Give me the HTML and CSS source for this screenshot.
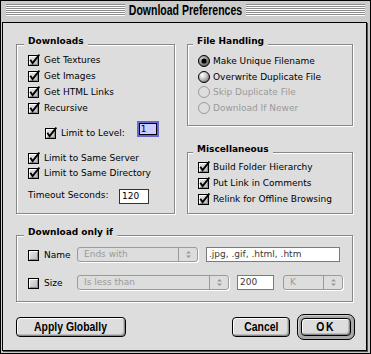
FILE: index.html
```html
<!DOCTYPE html>
<html>
<head>
<meta charset="utf-8">
<title>Download Preferences</title>
<link rel="stylesheet" href="styles.css">
</head>
<body>
<svg class="defs" width="0" height="0" aria-hidden="true">
  <defs>
    <linearGradient id="cbg" x1="0" y1="0" x2="1" y2="1">
      <stop offset="0" stop-color="#eeeeee"/>
      <stop offset="1" stop-color="#b4b4b4"/>
    </linearGradient>
    <radialGradient id="rdg" cx="0.35" cy="0.32" r="0.75">
      <stop offset="0" stop-color="#ffffff"/>
      <stop offset="0.5" stop-color="#c8c8c8"/>
      <stop offset="1" stop-color="#6e6e6e"/>
    </radialGradient>
    <radialGradient id="rdsel" cx="0.35" cy="0.32" r="0.75">
      <stop offset="0" stop-color="#d8d8d8"/>
      <stop offset="1" stop-color="#555555"/>
    </radialGradient>
    <symbol id="cb-off" viewBox="0 0 12 12">
      <rect x="0.5" y="1.5" width="10" height="10" fill="url(#cbg)" stroke="#000"/>
      <path d="M1.5 10V2.5H9.5" fill="none" stroke="#fff"/>
      <path d="M9.5 3V10.5H2" fill="none" stroke="#8a8a8a"/>
    </symbol>
    <symbol id="cb-on" viewBox="0 0 12 12">
      <rect x="0.5" y="1.5" width="10" height="10" fill="url(#cbg)" stroke="#000"/>
      <path d="M1.5 10V2.5H9.5" fill="none" stroke="#fff"/>
      <path d="M9.5 3V10.5H2" fill="none" stroke="#8a8a8a"/>
      <path d="M2.3 5.8L4.6 9.2L11.4 0.6" fill="none" stroke="#000" stroke-width="1.9"/>
    </symbol>
    <symbol id="rd-on" viewBox="0 0 12 12">
      <circle cx="6" cy="6" r="5.5" fill="url(#rdsel)" stroke="#000"/>
      <circle cx="6" cy="6" r="2.6" fill="#000"/>
    </symbol>
    <symbol id="rd-off" viewBox="0 0 12 12">
      <circle cx="6" cy="6" r="5.5" fill="url(#rdg)" stroke="#000"/>
    </symbol>
    <symbol id="rd-dis" viewBox="0 0 12 12">
      <circle cx="6" cy="6" r="5.5" fill="#dddddd" stroke="#9a9a9a"/>
    </symbol>
    <symbol id="arrows" viewBox="0 0 7 9">
      <path d="M1 3.5L3.5 1L6 3.5Z M1 5.5L3.5 8L6 5.5Z" fill="#999"/>
    </symbol>
  </defs>
</svg>

<div class="window">
  <div class="titlebar">
    <div class="stripes"></div>
    <div class="title"><span>Download Preferences</span></div>
    <div class="stripes"></div>
  </div>

  <div class="content">
    <div class="toprow">
      <div class="group downloads">
        <div class="glabel">Downloads</div>
        <div class="checks c1">
          <div class="row"><svg class="cb"><use href="#cb-on"/></svg><span>Get Textures</span></div>
          <div class="row"><svg class="cb"><use href="#cb-on"/></svg><span>Get Images</span></div>
          <div class="row"><svg class="cb"><use href="#cb-on"/></svg><span>Get HTML Links</span></div>
          <div class="row"><svg class="cb"><use href="#cb-on"/></svg><span>Recursive</span></div>
        </div>
        <div class="row level">
          <svg class="cb"><use href="#cb-on"/></svg><span>Limit to Level:</span>
          <div class="field focus">1</div>
        </div>
        <div class="checks c2">
          <div class="row"><svg class="cb"><use href="#cb-on"/></svg><span>Limit to Same Server</span></div>
          <div class="row"><svg class="cb"><use href="#cb-on"/></svg><span>Limit to Same Directory</span></div>
        </div>
        <div class="row timeout">
          <span class="tlabel">Timeout Seconds:</span>
          <div class="field tfield">120</div>
        </div>
      </div>

      <div class="rightcol">
        <div class="group filehandling">
          <div class="glabel small">File Handling</div>
          <div class="checks radios">
            <div class="row"><svg class="cb"><use href="#rd-on"/></svg><span>Make Unique Filename</span></div>
            <div class="row"><svg class="cb"><use href="#rd-off"/></svg><span>Overwrite Duplicate File</span></div>
            <div class="row dis"><svg class="cb"><use href="#rd-dis"/></svg><span>Skip Duplicate File</span></div>
            <div class="row dis"><svg class="cb"><use href="#rd-dis"/></svg><span>Download If Newer</span></div>
          </div>
        </div>
        <div class="group misc">
          <div class="glabel small">Miscellaneous</div>
          <div class="checks mchecks">
            <div class="row"><svg class="cb"><use href="#cb-on"/></svg><span>Build Folder Hierarchy</span></div>
            <div class="row"><svg class="cb"><use href="#cb-on"/></svg><span>Put Link in Comments</span></div>
            <div class="row"><svg class="cb"><use href="#cb-on"/></svg><span>Relink for Offline Browsing</span></div>
          </div>
        </div>
      </div>
    </div>

    <div class="group onlyif">
      <div class="glabel">Download only if</div>
      <div class="crit">
        <div class="row crow">
          <svg class="cb"><use href="#cb-off"/></svg><span class="clabel">Name</span>
          <div class="popup p-name"><span class="ptext">Ends with</span><span class="parrow"><svg class="arr"><use href="#arrows"/></svg></span></div>
          <div class="field dfield f-ext">.jpg, .gif, .html, .htm</div>
        </div>
        <div class="row crow">
          <svg class="cb"><use href="#cb-off"/></svg><span class="clabel">Size</span>
          <div class="popup p-size"><span class="ptext">Is less than</span><span class="parrow"><svg class="arr"><use href="#arrows"/></svg></span></div>
          <div class="field dfield f-size">200</div>
          <div class="popup p-unit"><span class="ptext">K</span><span class="parrow"><svg class="arr"><use href="#arrows"/></svg></span></div>
        </div>
      </div>
    </div>

    <div class="buttons">
      <div class="btn apply"><span>Apply Globally</span></div>
      <div class="btngroup">
        <div class="btn cancel"><span>Cancel</span></div>
        <div class="okring"><div class="btn ok"><span>OK</span></div></div>
      </div>
    </div>
  </div>
</div>
</body>
</html>
```

FILE: styles.css
```css
* { box-sizing: border-box; }

html, body {
  margin: 0;
  padding: 0;
}

body {
  width: 371px;
  height: 354px;
  overflow: hidden;
  background: #fff;
  font-family: "DejaVu Sans", Verdana, sans-serif;
  font-size: 9px;
  line-height: 12px;
  color: #000;
}

.defs {
  position: absolute;
  width: 0;
  height: 0;
  overflow: hidden;
}

.window {
  width: 371px;
  height: 354px;
  border: 1px solid #000;
  background: #cccccc;
  display: flex;
  flex-direction: column;
}

/* ---------- title bar ---------- */
.titlebar {
  flex: none;
  height: 21px;
  padding: 3px 5px 0;
  display: flex;
}

.stripes {
  flex: 1;
  height: 12px;
  background: repeating-linear-gradient(to bottom, #8c8c8c 0 1px, #ffffff 1px 2px);
}

.title {
  width: 121px;
  display: flex;
  justify-content: center;
  margin-top: -1px;
  font-family: "Liberation Sans", Arial, sans-serif;
  font-weight: bold;
  font-size: 14px;
  line-height: 14px;
}

.title span {
  white-space: nowrap;
  transform: scaleX(0.75);
}

/* ---------- content ---------- */
.content {
  flex: 1;
  margin: 0 3px 2px 1px;
  border: 1px solid #000;
  box-shadow: 1px 1px 0 #555;
  background: #dddddd;
  padding: 21px 0 0 13px;
}

.toprow {
  display: flex;
  gap: 12px;
  height: 170px;
}

.group {
  border: 1px solid #888;
  box-shadow: inset 1px 1px 0 #fff, 1px 1px 0 #fff;
}

.glabel {
  width: fit-content;
  margin: -10px 0 0 7px;
  padding: 0 4px;
  background: #dddddd;
  font-weight: bold;
  line-height: 12px;
  white-space: nowrap;
}

.glabel.small { margin-left: 5px; }

.downloads { width: 159px; }

.checks {
  display: flex;
  flex-direction: column;
  gap: 4px;
}

.row {
  display: flex;
  align-items: center;
  gap: 4px;
  white-space: nowrap;
}

.cb {
  flex: none;
  width: 12px;
  height: 12px;
}

.c1 { margin: 7px 0 0 11px; }

.level {
  margin: 9px 0 0 28px;
}

.field {
  flex: none;
  background: #fff;
  border: 1px solid #333;
  line-height: 12px;
  padding-left: 2px;
}

.field.focus {
  width: 18px;
  height: 12px;
  margin: 0 0 8px 10px;
  border: 1px solid #000;
  background: #ccccff;
  box-shadow: 0 0 0 2px #6767cf;
  line-height: 10px;
  padding-left: 1px;
}

.c2 {
  margin: 9px 0 0 11px;
  gap: 3px;
}

.timeout {
  margin: 10px 0 0 11px;
  align-items: flex-start;
  gap: 0;
}

.tlabel { width: 91px; }

.tfield {
  width: 30px;
  height: 15px;
  line-height: 13px;
}

/* right column */
.rightcol {
  width: 166px;
  display: flex;
  flex-direction: column;
  justify-content: space-between;
}

.filehandling { height: 82px; }
.misc { height: 62px; }

.radios {
  margin: 8px 0 0 10px;
  gap: 3.5px;
}

.radios .row,
.mchecks .row { gap: 3px; }

.dis { color: #9a9a9a; }

.mchecks {
  margin: 6px 0 0 10px;
}

/* ---------- download only if ---------- */
.onlyif {
  width: 337px;
  height: 67px;
  margin-top: 21px;
}

.crit {
  margin: 9px 0 0 11px;
  display: flex;
  flex-direction: column;
  gap: 13px;
}

.crow {
  height: 15px;
  gap: 0;
}

.crow .cb { margin-right: 4px; }

.clabel { width: 33px; }

.popup {
  flex: none;
  display: flex;
  height: 15px;
  border: 1px solid #9a9a9a;
  border-radius: 3px;
  color: #9a9a9a;
  background: #dddddd;
  box-shadow: 1px 1px 0 #fff;
}

.ptext {
  flex: 1;
  padding-left: 6px;
  line-height: 13px;
}

.parrow {
  width: 19px;
  border-left: 1px solid #9a9a9a;
  display: flex;
  align-items: center;
  justify-content: center;
}

.arr { width: 7px; height: 9px; }

.p-name { width: 121px; }
.p-size { width: 152px; }
.p-unit { width: 60px; margin-left: 9px; }

.dfield {
  height: 15px;
  line-height: 13px;
  border-color: #7a7a7a;
  color: #3a3a3a;
  margin-left: 8px;
}

.f-ext { width: 134px; }
.f-size { width: 37px; }

/* ---------- buttons ---------- */
.buttons {
  width: 339px;
  margin-top: 12px;
  display: flex;
  justify-content: space-between;
  align-items: center;
}

.btngroup {
  display: flex;
  align-items: center;
  gap: 7px;
}

.btn {
  height: 20px;
  border: 1px solid #000;
  border-radius: 4px;
  background: #dddddd;
  box-shadow: inset 1px 1px 0 #fff, inset -1px -1px 0 #8a8a8a, inset -2px -2px 0 #bbbbbb;
  display: flex;
  align-items: center;
  justify-content: center;
  font-family: "Liberation Sans", Arial, sans-serif;
  font-weight: bold;
  font-size: 13px;
  line-height: 14px;
}

.btn span {
  white-space: nowrap;
  transform: scaleX(0.8);
}

.apply { width: 110px; }
.cancel { width: 58px; }

.okring {
  width: 58px;
  height: 26px;
  border: 1px solid #000;
  border-radius: 7px;
  padding: 3px;
  background: #a8a8a8;
  box-shadow: inset 1px 1px 0 #d0d0d0;
}

.ok {
  width: 50px;
  height: 18px;
  letter-spacing: 2px;
}
```
